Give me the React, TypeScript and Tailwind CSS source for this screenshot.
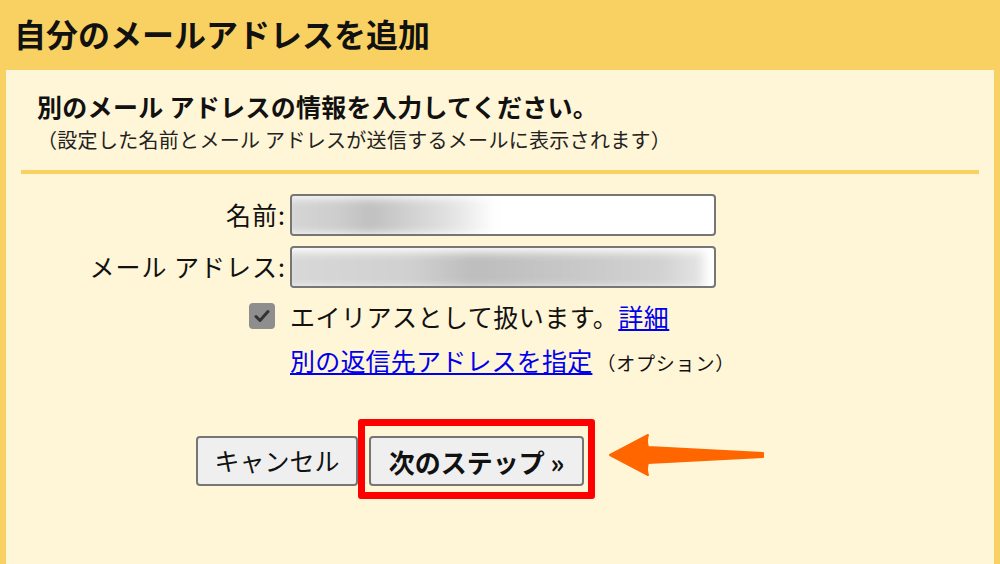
import React from "react";

const FONT = "font-['Noto_Sans_CJK_JP','Noto_Sans',sans-serif]";

function BlurredInput({ kind }: { kind: "name" | "email" }) {
  return (
    <div className="relative h-[42px] w-[426px] overflow-hidden rounded-[4px] border-2 border-[#767676] bg-white">
      {kind === "name" ? (
        <div className="absolute left-[-6px] top-[2px] h-[36px] w-[210px] bg-[linear-gradient(90deg,#d6d6d6_0%,#cdcdcd_25%,#c0c0c0_40%,#d2d2d2_60%,#e4e4e4_80%,#ffffff_100%)] blur-[5px]" />
      ) : (
        <div className="absolute left-[-6px] top-[4px] h-[36px] w-[418px] bg-[linear-gradient(90deg,#d8d8d8_0%,#d0d0d0_30%,#bdbdbd_45%,#c6c6c6_65%,#d2d2d2_90%,#e6e6e6_100%)] blur-[5px]" />
      )}
    </div>
  );
}

export default function App() {
  return (
    <div className={`h-[564px] w-[1000px] overflow-hidden bg-[#f9d163] ${FONT}`}>
      {/* Title */}
      <div className="flex h-[70px] items-center pb-[5px] pl-[14px]">
        <h1 className="text-[32px] font-bold leading-none text-[#111]">
          自分のメールアドレスを追加
        </h1>
      </div>

      {/* Panel */}
      <div className="relative mx-[6px] h-[494px] bg-[#fff5d7] px-[15px]">
        <div className="pl-[16px] pt-[21px]">
          <p className="text-[25px] font-bold leading-[30px] tracking-[0.3px] text-[#111]">
            別のメール アドレスの情報を入力してください。
          </p>
          <p className="mt-[7px] text-[20px] leading-[24px] tracking-[0.3px] text-[#222]">
            （設定した名前とメール アドレスが送信するメールに表示されます）
          </p>
        </div>

        <div className="mt-[18px] h-[4px] bg-[#f9d163]" />

        {/* Form */}
        <div className="mt-[20px] grid grid-cols-[265px_426px] items-center gap-x-[4px] gap-y-[10px] text-[25px] tracking-[1px] text-[#111]">
          <label className="text-right">名前:</label>
          <BlurredInput kind="name" />
          <label className="text-right">メール アドレス:</label>
          <BlurredInput kind="email" />
        </div>

        <div className="mt-[13px] grid grid-cols-[265px_1fr] items-center gap-x-[4px] gap-y-[14px]">
          <div className="flex justify-end pr-[11px]">
            <div className="flex h-[26px] w-[26px] items-center justify-center rounded-[4px] bg-[#8e8e8e]">
              <svg width="18" height="18" viewBox="0 0 18 18" fill="none">
                <path d="M3 9.5 L7 13.5 L15 4.5" stroke="#333" strokeWidth="3" strokeLinecap="round" strokeLinejoin="round" />
              </svg>
            </div>
          </div>
          <div className="text-[25px] leading-[30px] tracking-[0.5px] text-[#111]">
            エイリアスとして扱います。
            <a href="#" className="text-[#0000ee] underline">
              詳細
            </a>
          </div>
          <div />
          <div className="flex items-baseline leading-[30px]">
            <a href="#" className="text-[25px] tracking-[0.2px] text-[#0000ee] underline">
              別の返信先アドレスを指定
            </a>
            <span className="ml-[4px] text-[19px] tracking-[0.8px] text-[#111]">（オプション）</span>
          </div>
        </div>

        {/* Buttons */}
        <div className="mt-[41px] flex items-start pl-[175px]">
          <button className="mt-[17px] h-[50px] w-[162px] rounded-[4px] border-2 border-[#767676] bg-[#efefef] text-[25px] text-[#111]">
            キャンセル
          </button>
          <div className="rounded-[3px] border-[7px] border-[#ff0000] px-[4px] pb-[6px] pt-[10px]">
            <button className="h-[50px] w-[215px] rounded-[4px] border-2 border-[#767676] bg-[#efefef] text-[26px] font-bold text-[#111]">
              次のステップ »
            </button>
          </div>
        </div>

        {/* Annotation arrow */}
        <svg
          className="absolute left-[598px] top-[362px]"
          width="170"
          height="50"
          viewBox="598 362 170 50"
        >
          <path
            d="M604,385 L642,365 Q640,371 642,377 L757,383 L757,387 L642,393 Q640,399 642,405 Z"
            fill="#ff6600"
            stroke="#ff6600"
            strokeWidth="2"
            strokeLinejoin="round"
          />
        </svg>
      </div>
    </div>
  );
}
